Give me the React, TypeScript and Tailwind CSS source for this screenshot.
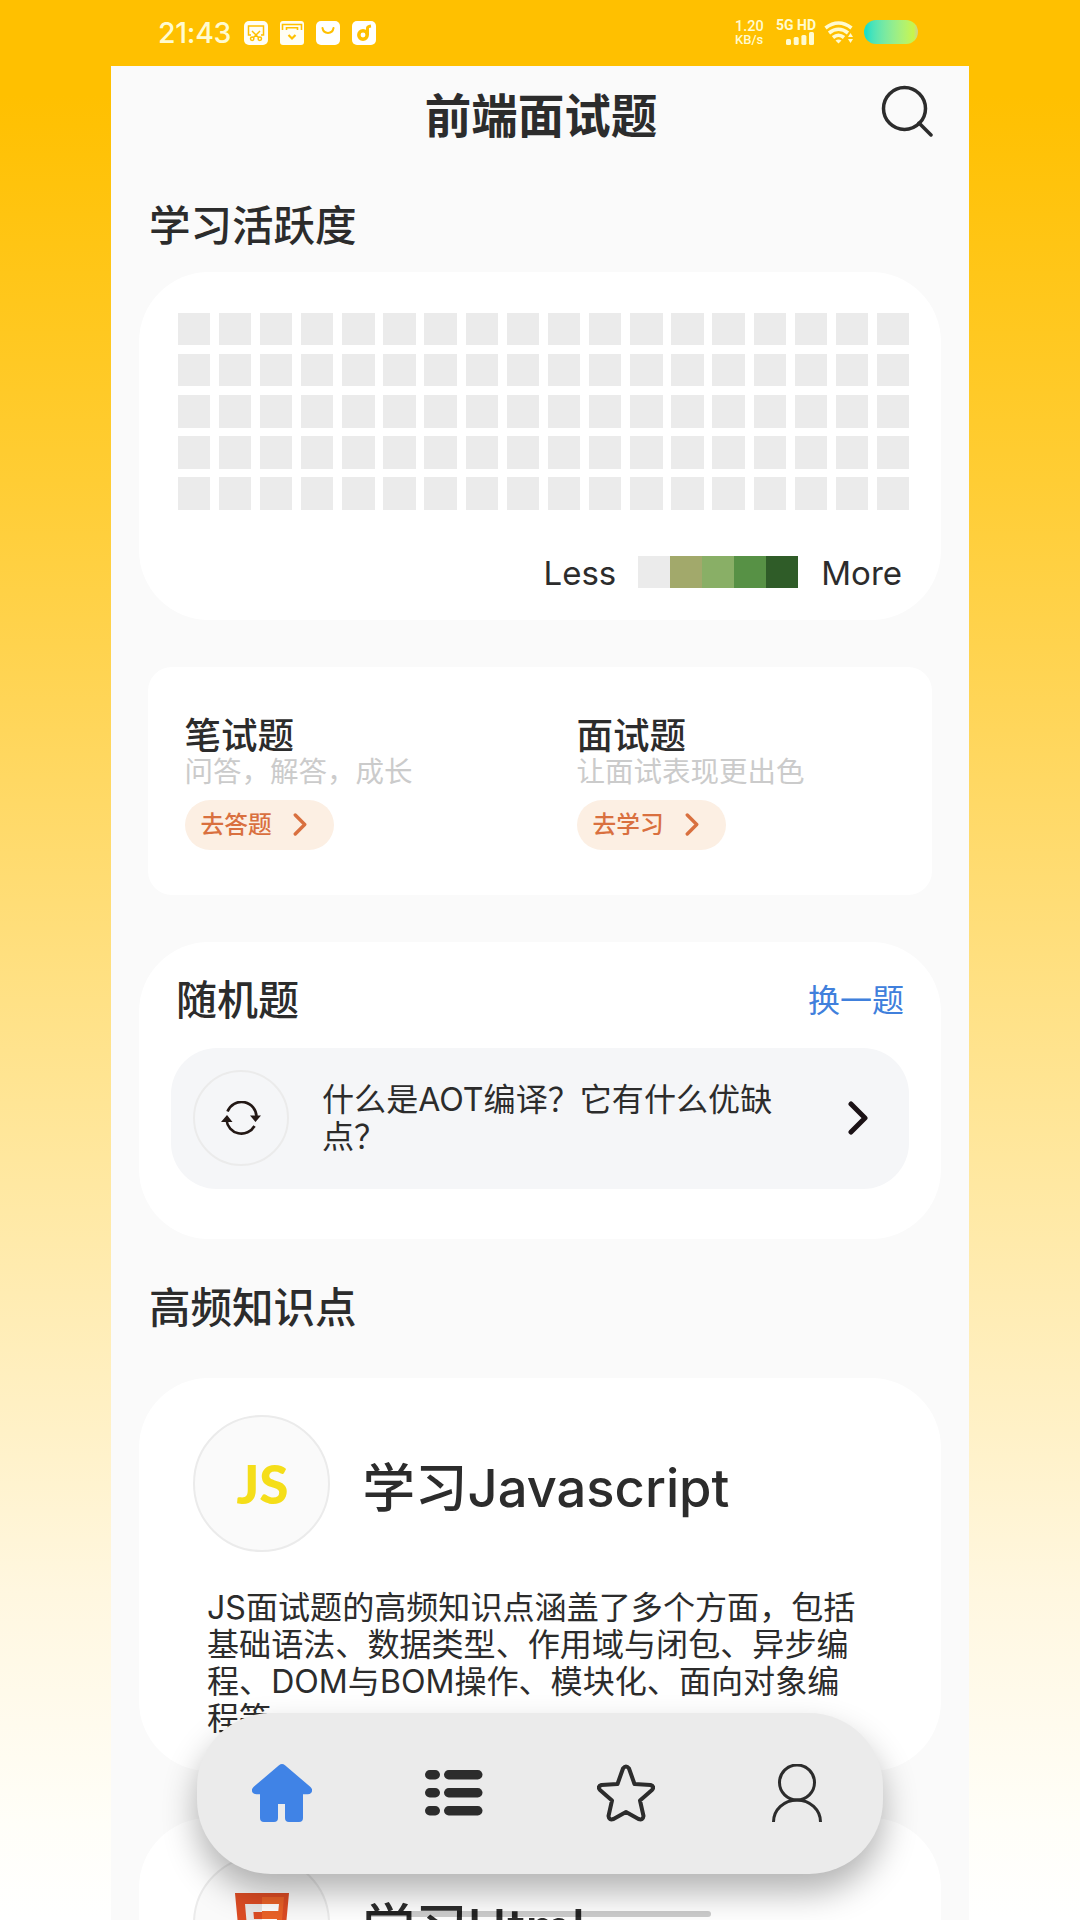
import React from 'react';

interface Entry {
  title: string;
  desc: string;
  action: string;
}

interface Topic {
  title: string;
  lines: string[];
  logo: React.ReactNode;
}

const entries: Entry[] = [
  { title: '笔试题', desc: '问答，解答，成长', action: '去答题' },
  { title: '面试题', desc: '让面试表现更出色', action: '去学习' },
];

const legend = ['bg-[#ebebeb]', 'bg-[#a2a96b]', 'bg-[#89af66]', 'bg-[#579145]', 'bg-[#2f5c28]'];

const HtmlLogo = () => (
  <svg width="54" height="62" viewBox="0 0 54 62">
    <path d="M0 0h54l-5 54-22 8-22-8z" fill="#dc4c24" />
    <path d="M27 4h22l-4 46-18 7z" fill="#ea6228" />
    <path d="M27 11H10l2 23h15v-8h-8l-.6-7H27z" fill="#e8e8e8" />
    <path d="M27 11h17l-.7 7H27zM27 26h15l-2 18-13 5v-8l6-2 .6-5H27z" fill="#fff" />
  </svg>
);

const topics: Topic[] = [
  {
    title: '学习Javascript',
    lines: [
      'JS面试题的高频知识点涵盖了多个方面，包括',
      '基础语法、数据类型、作用域与闭包、异步编',
      '程、DOM与BOM操作、模块化、面向对象编',
      '程等',
    ],
    logo: <span className="pl-[2px] font-['Lato'] text-[53px] leading-none font-black text-[#f5de19]">JS</span>,
  },
  { title: '学习Html', lines: [], logo: <HtmlLogo /> },
];

const StatusBar = () => (
  <div className="flex h-[65.5px] shrink-0 items-start justify-between pt-[20px] pr-[51px] pl-[47px] text-[#fffbd0]">
    <div className="flex items-center">
      <span className="w-[86px] font-['Inter'] text-[28.500px] leading-[26px] font-medium tracking-[-0.3px] whitespace-nowrap">21:43</span>
      <div className="flex gap-3">
        <svg width="24" height="24" viewBox="0 0 24 24" fill="none" stroke="#ffc000" strokeWidth="1.5">
          <rect width="24" height="24" rx="5" fill="#fffef5" stroke="none" />
          <path d="M7 14H4.500V5h15v9H17M8 10l7 7M16 10l-7 7" />
          <circle cx="8.200" cy="17.800" r="1.700" />
          <circle cx="15.800" cy="17.800" r="1.700" />
        </svg>
        <svg width="24" height="24" viewBox="0 0 24 24" fill="none" stroke="#ffc000" strokeWidth="1.600">
          <rect width="24" height="24" rx="3" fill="#fffef5" stroke="none" />
          <path d="M2.500 9V3.500h19V9M6.500 9V6.800h11V9" />
          <path d="M8.500 14l3.500 3.500 3.500-3.500" strokeWidth="2.200" />
        </svg>
        <svg width="24" height="24" viewBox="0 0 24 24" fill="none" stroke="#ffc000" strokeWidth="2">
          <rect width="24" height="24" rx="5" fill="#fff" stroke="none" />
          <path d="M6.500 7c1 6.500 10 6.500 11 0" strokeLinecap="round" />
        </svg>
        <svg width="24" height="24" viewBox="0 0 24 24" fill="none" stroke="#ffc000">
          <rect width="24" height="24" rx="5" fill="#fff" stroke="none" />
          <circle cx="11" cy="14" r="4.200" strokeWidth="3.500" />
          <path d="M15.500 14V7q0-1.500 3.500-2" strokeWidth="3" />
        </svg>
      </div>
    </div>
    <div className="flex items-start">
      <div className="w-[41px] font-['Roboto'] text-[14.500px] leading-[13px] font-medium">
        <p>1.20</p>
        <p className="text-[13px]">KB/s</p>
      </div>
      <div className="-mt-px flex w-[48px] flex-col">
        <span className="font-['Roboto'] text-[14px] leading-[13px] font-bold whitespace-nowrap">5G HD</span>
        <svg className="ml-[10px]" width="28" height="13" viewBox="0 0 28 13" fill="currentColor">
          <rect y="7" width="5" height="6" rx="1.500" />
          <rect x="7.700" y="5" width="5" height="8" rx="1.500" />
          <rect x="15.400" y="3" width="5" height="10" rx="1.500" />
          <rect x="23" y="0" width="5" height="13" rx="1.500" />
        </svg>
      </div>
      <svg className="mt-px mr-[10px]" width="30" height="23" viewBox="0 0 30 23" fill="none" stroke="currentColor" strokeWidth="3.600">
        <path d="M1.500 7q13-10 26 0M5 12q9.500-7.500 19 0M9 16.500q5.500-4.500 11 0" />
        <path d="M11.500 19.500q3-2 6 0l-3 3z" fill="currentColor" stroke="none" />
        <path d="M24 16l2.500-4 2.500 4zM24 18l2.500 4 2.500-4z" fill="currentColor" stroke="none" />
      </svg>
      <div className="h-6 w-[54px] rounded-full bg-linear-to-r from-[#1fe0c4] from-5% via-[#c8f54a] via-92% to-[#cfd08a]" />
    </div>
  </div>
);

const Chevron = ({ className, strokeWidth }: { className: string; strokeWidth: number }) => (
  <svg className={className} viewBox="0 0 20 34" fill="none" stroke="currentColor" strokeWidth={strokeWidth} strokeLinecap="round" strokeLinejoin="round">
    <path d="M3 3l14 14L3 31" />
  </svg>
);

const ActivityCard = () => (
  <section className="mx-[28px] h-[348px] shrink-0 rounded-[70px] bg-white pt-[41.500px] pl-[38.500px]">
    <div className="grid w-[732px] grid-cols-18 gap-x-[8.600px] gap-y-[8.700px]">
      {Array.from({ length: 90 }, (_, i) => (
        <div key={i} className="h-[32.400px] bg-[#ebebeb]" />
      ))}
    </div>
    <div className="mt-[44.500px] flex items-center justify-end pr-[39px] font-['Inter'] text-[33px] leading-[32px]">
      <span className="pt-[3px]">Less</span>
      <div className="mr-[23px] ml-[22px] flex">
        {legend.map((color) => (
          <div key={color} className={`size-8 ${color}`} />
        ))}
      </div>
      <span className="pt-[3px]">More</span>
    </div>
  </section>
);

const EntryCard = () => (
  <section className="mr-[37.500px] ml-[36.500px] mt-[47px] grid h-[228px] shrink-0 grid-cols-2 content-start rounded-[24px] bg-white pt-[50px]">
    {entries.map((entry) => (
      <div key={entry.title} className="pl-[37px]">
        <h3 className="text-[36.500px] leading-[38px] font-medium">{entry.title}</h3>
        <p className="text-[28.500px] leading-[34px] text-[#cbcbcb]">{entry.desc}</p>
        <button className="mt-[11px] flex h-[50px] w-[149px] items-center rounded-full bg-[#fcefe3] pl-[16px] text-[23.700px] text-[#d9703f]">
          <span className="leading-none font-medium">{entry.action}</span>
          <Chevron className="ml-[21px] h-[23px] w-[14px]" strokeWidth={5} />
        </button>
      </div>
    ))}
  </section>
);

const RandomCard = () => (
  <section className="mx-[28px] mt-[47px] h-[297px] shrink-0 rounded-[70px] bg-white pt-[35px]">
    <div className="flex h-[48px] items-center justify-between pr-[37px] pl-[37px]">
      <h2 className="text-[41px] leading-none font-medium">随机题</h2>
      <span className="text-[32px] leading-none text-[#4080dc]">换一题</span>
    </div>
    <div className="mt-[23px] mr-[32px] ml-[32px] flex h-[141.500px] items-center rounded-[46px] bg-[#f5f6f8]">
      <div className="ml-[22px] flex size-24 items-center justify-center rounded-full border-2 border-[#ebebeb]">
        <svg width="40" height="34" viewBox="0 0 40 34" fill="none" stroke="#231815" strokeWidth="2.600">
          <path d="M6.500 10.500A15 15 0 0 1 35.500 16M33.500 25A15 15 0 0 1 5.500 19" />
          <path d="M29 14.500h11l-5.500 6.500zM0 21h11.500L6 14z" fill="#231815" stroke="none" />
        </svg>
      </div>
      <p className="ml-[33px] w-[460px] text-[32.100px] leading-[37px] whitespace-nowrap">
        什么是AOT编译？它有什么优缺
        <br />
        点？
      </p>
      <Chevron className="ml-[66px] h-[34px] w-[20px] text-[#1b1216]" strokeWidth={5} />
    </div>
  </section>
);

const TopicCard = ({ topic }: { topic: Topic }) => (
  <section className="mx-[28px] h-[393px] shrink-0 rounded-[70px] bg-white pt-[37px]">
    <div className="flex items-center pl-[54px]">
      <div className="flex size-[137px] items-center justify-center rounded-full border-2 border-[#ebebeb] bg-[#fafafa]">{topic.logo}</div>
      <h2 className="ml-[32.500px] pt-[9px] text-[52.500px] leading-none font-medium">{topic.title}</h2>
    </div>
    <div className="mt-[36.500px] pl-[68px] text-[32.100px] leading-[37px] whitespace-nowrap">
      {topic.lines.map((line) => (
        <p key={line}>{line}</p>
      ))}
    </div>
  </section>
);

const TabBar = () => (
  <nav className="absolute top-[1713px] left-[85.500px] grid h-[161px] w-[686.500px] grid-cols-4 place-items-center rounded-[74px] bg-[#ebebeb] pb-[2px] shadow-[0_18px_34px_rgba(0,0,0,0.3)]">
    <svg width="60" height="58" viewBox="0 0 60 58" fill="#4083e6">
      <path d="M27 1.200q3-2.200 6 0L58.500 23q3 3 .5 6-1 1.200-3.500 1.200H51V54q0 4-4 4H37q-4 0-4-4V40h-7v14q0 4-4 4H12q-4 0-4-4V30.200H4.500Q2 30.200 1 29q-2.500-3 .5-6z" />
    </svg>
    <svg width="58" height="46" viewBox="0 0 58 46" fill="#2c2c2c">
      {[0, 18, 36].map((y) => (
        <g key={y}>
          <rect x="0" y={y} width="15" height="9.500" rx="4.750" />
          <rect x="19" y={y} width="38.500" height="9.500" rx="4.750" />
        </g>
      ))}
    </svg>
    <svg width="58" height="58" viewBox="0 0 58 58" fill="none" stroke="#2c2c2c" strokeWidth="4" strokeLinejoin="round">
      <path d="M26 4.500q3-4 6 0l5.500 15.500 16 1q4.500 1.500 1.500 5L43 36.500l3.500 15.500q-.5 4.500-5 3L29 48l-12.500 7q-4.500 1.500-5-3L15 36.500 3 26q-3-3.500 1.500-5l16-1z" />
    </svg>
    <svg width="52" height="58" viewBox="0 0 52 58" fill="none" stroke="#2c2c2c" strokeWidth="3">
      <circle cx="26" cy="18.500" r="17.500" />
      <path d="M2.500 58a23.500 22 0 0 1 47 0" />
    </svg>
  </nav>
);

const App: React.FC = () => {
  return (
    <div className="flex h-[1920px] w-[1080px] justify-center overflow-hidden bg-[linear-gradient(to_bottom,#ffc000_5%,#ffcd34_25%,#ffd65b_38%,#ffe491_56%,#fff7e0_83%,#fffef8_95%,#ffffff)] font-['Inter','Noto_Sans_CJK_SC',sans-serif] text-[#2c2c2c]">
      <div className="relative flex h-full w-[858px] flex-col">
        <StatusBar />
        <main className="flex flex-1 flex-col overflow-hidden bg-[#fafafa]">
          <header className="flex h-[101px] shrink-0 items-center pr-[36px]">
            <h1 className="flex-1 pt-px pl-[90px] text-center text-[46.500px] leading-none font-bold">前端面试题</h1>
            <svg className="-mt-[10px]" width="52" height="52" viewBox="0 0 52 52" fill="none" stroke="#2c2c2c" strokeWidth="3.500" strokeLinecap="round">
              <circle cx="23.500" cy="23.500" r="21" />
              <path d="M38 38l12 12" />
            </svg>
          </header>
          <h2 className="mt-[38px] mb-[25px] shrink-0 pl-[38px] text-[41.500px] leading-[42px] font-medium">学习活跃度</h2>
          <ActivityCard />
          <EntryCard />
          <RandomCard />
          <h2 className="mt-[48.500px] mb-[49px] shrink-0 pl-[38px] text-[41.500px] leading-[42px] font-medium">高频知识点</h2>
          <div className="flex flex-col gap-[47px]">
            {topics.map((topic) => (
              <TopicCard key={topic.title} topic={topic} />
            ))}
          </div>
        </main>
        <TabBar />
        <div className="absolute top-[1911px] left-[258px] h-[6px] w-[342px] rounded-full bg-black/20" />
      </div>
    </div>
  );
};

export default App;
